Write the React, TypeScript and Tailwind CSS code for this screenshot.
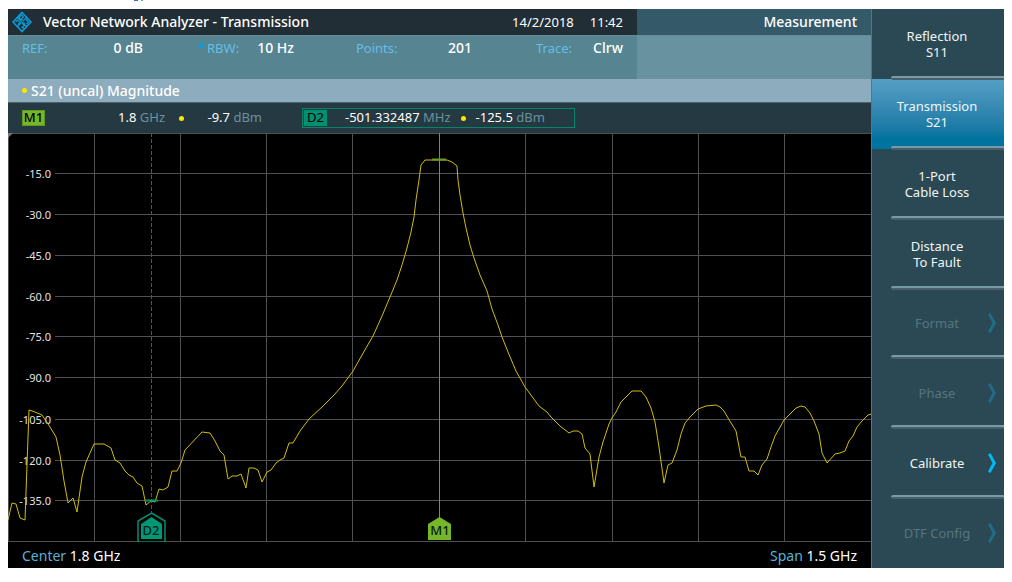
import { clsx } from "clsx";

const TRACE =
  "8,520 12,503 16,504 20,518 25,520 29,410 35,412 42,415 50,427 56,437 60,455 64,481 68,503 73,498 77,512 82,477 86,462 94,444 104,444 111,448 115,460 120,463 125,471 129,475 133,477 137,483 142,486 146,505 151,501 155,502 159,489 163,490 168,487 172,471 177,471 181,463 185,450 202,432 210,433 215,441 220,451 224,455 228,479 232,476 237,476 241,474 246,488 249,468 254,468 258,470 262,482 267,472 271,470 276,463 280,460 284,458 289,443 293,443 300,431 309,419 322,407 334,395 342,386 353,371 366,348 373,336 382,316 390,297 397,280 402,265 407,248 411,232 414,217 416,200 419,180 421,165 425,160 447,160 452,162 457,166 458,180 460,195 463,213 466,228 470,245 474,258 480,275 487,291 492,309 498,325 502,337 508,352 516,371 525,387 539,406 547,412 551,417 560,426 569,433 573,431 578,431 582,434 585,448 590,454 594,487 599,457 603,442 609,424 612,418 616,412 621,402 632,391 641,391 646,397 651,408 655,422 659,447 664,483 668,465 672,463 677,450 681,434 685,423 690,417 698,409 706,406 716,405 720,407 724,411 728,418 736,431 741,457 745,457 749,471 754,471 758,475 762,465 767,459 771,447 775,436 784,420 796,408 801,406 805,407 810,413 814,421 819,434 822,453 827,463 835,454 840,453 845,451 849,441 853,436 857,427 862,421 868,415 871,414";

const GRID_X = [94, 180, 266, 352, 525, 612, 698, 784];

const LEVELS = [
  { y: 173, label: "-15.0" },
  { y: 214, label: "-30.0" },
  { y: 255, label: "-45.0" },
  { y: 296, label: "-60.0" },
  { y: 336, label: "-75.0" },
  { y: 377, label: "-90.0" },
  { y: 419, label: "-105.0" },
  { y: 460, label: "-120.0" },
  { y: 500, label: "-135.0" },
];

type Softkey = {
  lines: string[];
  active?: boolean;
  disabled?: boolean;
  more?: boolean;
};

const SOFTKEYS: Softkey[] = [
  { lines: ["Reflection", "S11"] },
  { lines: ["Transmission", "S21"], active: true },
  { lines: ["1-Port", "Cable Loss"] },
  { lines: ["Distance", "To Fault"] },
  { lines: ["Format"], disabled: true, more: true },
  { lines: ["Phase"], disabled: true, more: true },
  { lines: ["Calibrate"], more: true },
  { lines: ["DTF Config"], disabled: true, more: true },
];

const Logo = () => (
  <svg width="20" height="22" viewBox="0 0 20 22" fill="none" stroke="#0a9ddb" aria-hidden="true">
    <path d="M10 1.500 19 11 10 20.500 1 11Z" strokeWidth="1.6" />
    <path d="M5 6 15 16" strokeWidth="1.2" />
    <path d="M14.500 6.500 11 10M9 12 5.500 15.500" strokeWidth="1.2" />
    <path d="M7.500 8.500V5.500L10 4 11.500 6 8.500 8.500 11 9" strokeWidth="1.2" />
    <path d="M12.500 17.500 10 16.500 12.500 14.500 10.500 12.500 13 12" strokeWidth="1.2" />
    <path d="M3.500 11 5.500 9 8 11.500 6 13.500M14 8.500 16.500 11 14.500 13" strokeWidth="1.2" />
  </svg>
);

const Dot = () => <span className="size-[5px] shrink-0 rounded-full bg-[#ffe600]" />;

const Header = () => (
  <header className="flex h-[26px] text-sm text-white">
    <div className="flex flex-1 items-center bg-[#212e35] pl-1">
      <Logo />
      <h1 className="ml-[11px] font-medium">Vector Network Analyzer - Transmission</h1>
      <time className="ml-auto flex gap-4 pr-[14px] text-[13px]">
        <span>14/2/2018</span>
        <span>11:42</span>
      </time>
    </div>
    <div className="flex w-[234px] items-center justify-end bg-[#345a6a] pr-[14px] font-medium">Measurement</div>
  </header>
);

const Param = ({ name, value, className }: { name: string; value: string; className: string }) => (
  <div className={clsx("flex justify-between", className)}>
    <dt className="text-[13px] leading-6 text-[#62bfe8]">{name}:</dt>
    <dd className="font-medium text-white">{value}</dd>
  </div>
);

const Params = () => (
  <div className="flex h-11 border-t border-[#668c98] text-sm leading-6">
    <dl className="flex flex-1 bg-[#578491] pl-[14px]">
      <Param name="REF" value="0 dB" className="w-[121px]" />
      <span className="mt-[7px] mr-[3px] ml-14 size-[5px] rounded-full bg-[#0a9ddb]" />
      <Param name="RBW" value="10 Hz" className="w-[87px]" />
      <Param name="Points" value="201" className="ml-[62px] w-[116px]" />
      <Param name="Trace" value="Clrw" className="ml-16 w-[87px]" />
    </dl>
    <div className="w-[234px] bg-[#68929f]" />
  </div>
);

const MarkerRow = () => (
  <div className="flex h-[31px] items-center border-t border-[#49626d] bg-[#243941] pl-[14px] text-[13px] text-white">
    <span className="flex h-4 w-[23px] items-center justify-center border border-[#5f9a20] bg-[#76b72a] font-medium text-black">
      M1
    </span>
    <span className="w-[120px] text-right">
      1.8 <span className="text-[#6c909c]">GHz</span>
    </span>
    <span className="ml-[14px] flex">
      <Dot />
    </span>
    <span className="w-[78px] text-right">
      -9.7 <span className="text-[#6c909c]">dBm</span>
    </span>
    <div className="ml-10 flex h-5 w-[273px] items-center border border-[#078667] pl-px">
      <span className="flex h-4 w-[23px] items-center justify-center bg-[#008f70] text-black">D2</span>
      <span className="ml-[18px] whitespace-nowrap">
        -501.332487 <span className="text-[#6c909c]">MHz</span>
      </span>
      <span className="mx-2.5 flex">
        <Dot />
      </span>
      <span className="whitespace-nowrap">
        -125.5 <span className="text-[#6c909c]">dBm</span>
      </span>
    </div>
  </div>
);

const Chart = () => (
  <svg viewBox="8 133 863 409" className="block h-auto w-full bg-black" role="img" aria-label="S21 magnitude">
    <g stroke="#505054" shapeRendering="crispEdges" fill="none">
      <path d="M8 133.500H871M8 541.500H871M8.500 133V542" />
      {GRID_X.map((x) => (
        <path key={x} d={`M${x}.5 133V542`} />
      ))}
      {LEVELS.map(({ y }) => (
        <path key={y} d={`M55 ${y}.5H871`} />
      ))}
    </g>
    <path d="M8 133H13L8 138Z" fill="#77777a" />
    <g fill="#e2e2e2" fontSize="11" textAnchor="end">
      {LEVELS.map(({ y, label }) => (
        <text key={y} x="51" y={y + 5}>
          {label}
        </text>
      ))}
    </g>
    <path d="M151.500 133V516" stroke="#087a60" strokeDasharray="4 2" />
    <polyline points={TRACE} fill="none" stroke="#d2bd08" strokeLinejoin="round" />
    <path d="M439.500 133V520" stroke="#6a9c2a" />
    <path d="M432 159.500H446" stroke="#6a9c2a" strokeWidth="2" />
    <path d="M145 500.500H158" stroke="#009775" strokeWidth="2" />
    <path
      d="M151.500 513 165 521V540.500Q165 542 163.500 542H139.500Q138 542 138 540.500V521Z"
      fill="#000"
      stroke="#008f70"
      strokeWidth="1.5"
    />
    <path d="M151.500 517 162 524V539H141V524Z" fill="#009775" />
    <path d="M439.500 517 451 524V540H428V524Z" fill="#76b72a" />
    <g fill="#06221b" fontSize="13" fontWeight="500" textAnchor="middle">
      <text x="151" y="535">D2</text>
      <text x="440" y="535">M1</text>
    </g>
  </svg>
);

const SoftkeyButton = ({ lines, active, disabled, more }: Softkey) => (
  <button
    type="button"
    disabled={disabled}
    className={clsx(
      "relative flex w-full flex-1 flex-col items-center justify-center pr-0.5 text-[13px] leading-4",
      active ? "bg-linear-to-b from-[#559fc6] to-[#00739f] to-85%" : "bg-[#2b4954]",
      disabled ? "text-[#567480]" : "text-[#f0f4f5]",
    )}
  >
    {lines.map((line) => (
      <span key={line}>{line}</span>
    ))}
    {more && (
      <svg
        className={clsx("absolute right-2 h-5 w-2", disabled ? "text-[#216b86]" : "text-[#00b9f2]")}
        viewBox="0 0 8 20"
        fill="currentColor"
        aria-hidden="true"
      >
        <path d="M0 1.500 2.500 0 8 10 2.500 20 0 18.500 4.500 10Z" />
      </svg>
    )}
  </button>
);

export default function App() {
  return (
    <div className="relative min-h-screen bg-white px-2 pt-[9px] pb-[14px] font-['Noto_Sans',sans-serif]">
      <svg className="absolute top-0 left-[133px]" width="10" height="1" aria-hidden="true">
        <path d="M1 0H5V1H1Z" fill="#3f72b0" />
        <path d="M8 0H10V1H8Z" fill="#5aa5e0" />
      </svg>
      <div className="flex">
        <main className="min-w-0 flex-1 bg-black">
          <Header />
          <Params />
          <h2 className="flex h-[23px] items-center gap-1 bg-[#8dacbd] pl-[14px] text-sm font-medium text-white">
            <Dot />
            S21 (uncal) Magnitude
          </h2>
          <MarkerRow />
          <Chart />
          <footer className="flex h-[26px] items-center justify-between px-[14px] pt-0.5 text-sm text-white">
            <span>
              <span className="text-[#58b2da]">Center</span> 1.8 GHz
            </span>
            <span>
              <span className="text-[#58b2da]">Span</span> 1.5 GHz
            </span>
          </footer>
        </main>
        <nav className="flex w-[133px] flex-col border-l border-[#557783] bg-[#2b4954]">
          {SOFTKEYS.map((key, i) => (
            <div key={key.lines[0]} className="relative flex flex-1">
              <SoftkeyButton {...key} />
              {i < SOFTKEYS.length - 1 && (
                <span className="absolute right-0 -bottom-px left-[19px] z-10 h-1 rounded-l-sm border-b-2 border-[#48606b] bg-[#789aa6]" />
              )}
            </div>
          ))}
        </nav>
      </div>
    </div>
  );
}
